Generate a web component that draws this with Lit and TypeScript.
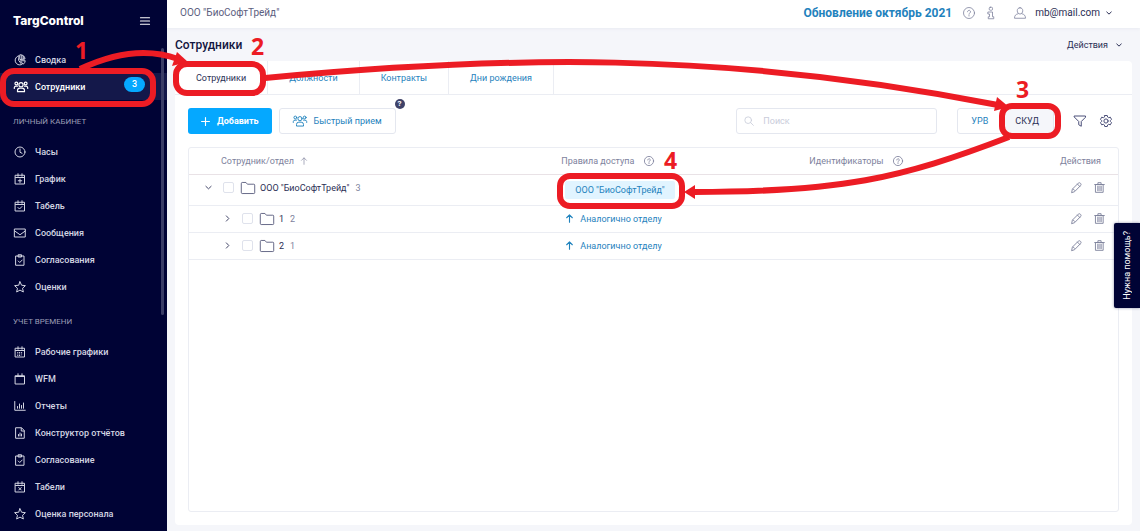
import { LitElement, html, css, svg, nothing } from "lit";
import { customElement, property, state } from "lit/decorators.js";
import { classMap } from "lit/directives/class-map.js";

const glyphs: Record<string, unknown> = {
  pie: svg`<path d="M9.500 3.500a9.300 9.300 0 1 0 6 17.500L9.500 13z"/><path d="M12.500 1.500a9.500 9.500 0 0 1 9.500 8.500l-9.500 1z"/><path d="M13.500 13.500h9a9 9 0 0 1-3.500 6.500z"/><path d="M15.500 3v7M18.500 4.500V10"/>`,
  people: svg`<circle cx="12" cy="8" r="3.6"/><path d="M6 20v-2a4 4 0 0 1 4-4h4a4 4 0 0 1 4 4v2z"/><circle cx="4" cy="6" r="2.4"/><circle cx="20" cy="6" r="2.4"/><path d="M.5 14.500V13a3 3 0 0 1 3-2.500H6M23.500 14.500V13a3 3 0 0 0-3-2.500H18"/>`,
  clock: svg`<circle cx="12" cy="12" r="10"/><path d="M12 6v6.500l4 2"/>`,
  calPlus: svg`<path d="M3 4.500h18V22H3zM3 9h18M8 1.500v5M16 1.500v5M12 12v7M8.500 15.500h7"/>`,
  calCheck: svg`<path d="M3 4.500h18V22H3zM3 9h18M8 1.500v5M16 1.500v5M8 15l3 3 5-5"/>`,
  calX: svg`<path d="M3 4.500h18V22H3zM3 9h18M8 1.500v5M16 1.500v5M9.500 13l5 5M14.500 13l-5 5"/>`,
  calDays: svg`<path d="M3 4.500h18V22H3zM3 9h18M8 1.500v5M16 1.500v5"/><path d="M6.500 13h11M6.500 16h11M6.500 19h8" stroke-dasharray="2 1.600" stroke-linecap="butt"/>`,
  cal: svg`<path d="M3 5.500h18V22H3zM3 7h18M8 1.500V6M16 1.500V6"/>`,
  mail: svg`<path d="M1.500 4h21v16h-21zM1.500 8L12 15.500 22.500 8"/>`,
  clipboard: svg`<path d="M4 4h16v18.500H4zM9 1.500h6V6H9zM8.500 14l3 3 5-5"/>`,
  star: svg`<path d="M12 1.500l3.200 7 7.600.8-5.700 5.200 1.600 7.500L12 18.200 5.300 22l1.600-7.500L1.200 9.300l7.600-.8z"/>`,
  chart: svg`<path d="M1.500 3v17.500h21M7 16.500V13M11 16.500V8M15 16.500V11M19 16.500V6"/>`,
  report: svg`<path d="M4 1.500h11L20.500 7v15.500H4zM14.500 2v6h6M9 18v-3M12 18v-6M15 18v-4"/>`,
  menu: svg`<path d="M1 4h22M1 12h22M1 20h22"/>`,
  help: svg`<circle cx="12" cy="12" r="11"/><path d="M9 9.500a3 3 0 1 1 4.500 2.600c-1 .6-1.500 1.200-1.500 2.400M12 17v1"/>`,
  info: svg`<rect x="8.500" y=".5" width="6.500" height="6" rx="2"/><path d="M6.500 10H15v9.500h2.500v4h-11v-4H9V14H6.500z"/>`,
  user: svg`<path d="M12 1.500c3.600 0 5.500 2.500 5.500 6s-2.200 6.500-5.500 6.500-5.500-3-5.500-6.500 1.900-6 5.500-6z"/><path d="M8 13.500c-4.500 1-7 3.500-7 9h22c0-5.500-2.500-8-7-9"/>`,
  down: svg`<path d="M3 8l9 8.500L21 8"/>`,
  right: svg`<path d="M8 3l8.500 9L8 21"/>`,
  plus: svg`<path d="M12 1.500v21M1.500 12h21"/>`,
  search: svg`<circle cx="10" cy="10" r="8"/><path d="M16 16l6.500 6.500"/>`,
  filter: svg`<path d="M1 2h22v2.500L14.500 13v9.500l-5-3V13L1 4.500z"/>`,
  gear: svg`<path d="M9.500 1h5l.8 3.200 2 1.200 3.400-1 2.300 4.400-2.300 2.300v1.800l2.300 2.300-2.300 4.400-3.400-1-2 1.200-.8 3.200h-5l-.8-3.200-2-1.200-3.400 1L1 15.200l2.300-2.300v-1.800L1 8.800l2.300-4.400 3.400 1 2-1.200z"/><circle cx="12" cy="12" r="4.200"/>`,
  up: svg`<path d="M12 22V3M4.500 10L12 2.500l7.500 7.500"/>`,
  folder: svg`<path d="M.5 4A1.500 1.500 0 0 1 2 2.500h6.500L11 5.500h11A1.500 1.500 0 0 1 23.500 7v13a1.500 1.500 0 0 1-1.500 1.500H2A1.500 1.500 0 0 1 .5 20z"/>`,
  pencil: svg`<path d="M1.500 22.500L3 15.500 16 2.500c1.500-1.500 3.200-1 4.700.4 1.400 1.400 1.800 3.200.3 4.700L8.500 20.500zM14 4.500l5.500 5.500M5 15.500l3 3"/>`,
  trash: svg`<path d="M4 5.500h16v17H4zM1.500 5.500h21M8.500 5V1.500h7V5"/><path d="M8 9v10M10.700 9v10M13.300 9v10M16 9v10" stroke-width="1.600"/>`,
};

@customElement("ui-icon")
export class UiIcon extends LitElement {
  @property() name = "";
  @property({ type: Number }) weight = 2;

  static styles = css`
    :host { display: inline-block; width: 12px; height: 12px; flex: none; }
    svg { display: block; width: 100%; height: 100%; overflow: visible; }
  `;

  render() {
    return html`<svg viewBox="0 0 24 24" fill="none" stroke="currentColor" stroke-width=${this.weight}
      stroke-linejoin="round" stroke-linecap="round" aria-hidden="true">${glyphs[this.name]}</svg>`;
  }
}

interface NavItem { icon: string; label: string; badge?: number; active?: boolean }
interface NavGroup { title?: string; items: NavItem[] }

const navigation: NavGroup[] = [
  { items: [
    { icon: "pie", label: "Сводка" },
    { icon: "people", label: "Сотрудники", badge: 3, active: true },
  ] },
  { title: "Личный кабинет", items: [
    { icon: "clock", label: "Часы" },
    { icon: "calPlus", label: "График" },
    { icon: "calCheck", label: "Табель" },
    { icon: "mail", label: "Сообщения" },
    { icon: "clipboard", label: "Согласования" },
    { icon: "star", label: "Оценки" },
  ] },
  { title: "Учет времени", items: [
    { icon: "calDays", label: "Рабочие графики" },
    { icon: "cal", label: "WFM" },
    { icon: "chart", label: "Отчеты" },
    { icon: "report", label: "Конструктор отчётов" },
    { icon: "clipboard", label: "Согласование" },
    { icon: "calX", label: "Табели" },
    { icon: "star", label: "Оценка персонала" },
  ] },
];

@customElement("app-sidebar")
export class AppSidebar extends LitElement {
  static styles = css`
    :host { display: block; position: relative; background: #000335; color: #d3d5e2; overflow: hidden; }
    .head { display: flex; align-items: center; justify-content: space-between; height: 41px; padding: 0 17px 0 13px; margin-bottom: 5px; }
    .brand { font: 800 12px/16px Inter, sans-serif; color: #fff; }
    .menu { border: 0; background: none; padding: 0; color: #fff; display: flex; }
    .menu ui-icon { width: 10px; height: 10px; }
    ul { list-style: none; margin: 0; padding: 0; }
    .title { margin: 0; padding: 5px 13px 0; font-size: 8px; line-height: 33px; font-weight: 400; text-transform: uppercase; color: #9a9cb4; }
    .link { display: flex; align-items: center; height: 27px; padding: 0 22px 0 14px; gap: 9px; color: inherit; text-decoration: none; font-weight: 500; }
    .link.active { background: #14184a; color: #fff; gap: 7px; }
    .link.active ui-icon { width: 14px; height: 14px; }
    .label { flex: 1; white-space: nowrap; }
    .badge { min-width: 21px; height: 15px; border-radius: 8px; background: #05a8ff; color: #fff; line-height: 15px; text-align: center; margin-bottom: 4px; }
    .thumb { position: absolute; top: 48px; right: 3px; width: 3px; height: 267px; border-radius: 2px; background: #3a3d66; }
  `;

  render() {
    return html`
      <div class="head">
        <span class="brand">TargControl</span>
        <button class="menu" aria-label="Меню"><ui-icon name="menu" weight="2.5"></ui-icon></button>
      </div>
      <nav>
        ${navigation.map((group) => html`
          ${group.title ? html`<h2 class="title">${group.title}</h2>` : nothing}
          <ul>
            ${group.items.map((item) => html`
              <li><a href="#" class=${classMap({ link: true, active: !!item.active })}>
                <ui-icon name=${item.icon}></ui-icon>
                <span class="label">${item.label}</span>
                ${item.badge ? html`<span class="badge">${item.badge}</span>` : nothing}
              </a></li>`)}
          </ul>`)}
      </nav>
      <div class="thumb"></div>`;
  }
}

interface Row { name: string; count: number; level: number; open?: boolean; rule?: string }

const rows: Row[] = [
  { name: "ООО \"БиоСофтТрейд\"", count: 3, level: 0, open: true, rule: "ООО \"БиоСофтТрейд\"" },
  { name: "1", count: 2, level: 1 },
  { name: "2", count: 1, level: 1 },
];

@customElement("staff-table")
export class StaffTable extends LitElement {
  static styles = css`
    :host { display: block; border: 1px solid #ebedf3; border-radius: 3px; }
    * { box-sizing: border-box; }
    table { width: 100%; border-collapse: collapse; table-layout: fixed; }
    th, td { height: 27px; padding: 0 12px 0 10px; text-align: left; font-weight: 400; border-bottom: 1px solid #ebedf3; white-space: nowrap; }
    th { height: 26px; color: #7e829d; border-bottom-color: #e9e2e6; }
    .tall td { height: 31px; }
    .tall .cell { padding-bottom: 4px; }
    .name { width: 39%; }
    .rules { width: 248px; }
    .acts { width: 72px; }
    th.name { padding-left: 32px; }
    th.acts { padding: 0 17px 0 0; text-align: right; }
    td.acts { padding: 0 13px 0 0; }
    .cell { display: flex; align-items: center; }
    .head-icon { width: 10px; height: 10px; margin-left: 10px; vertical-align: -2px; }
    .sort { width: 8px; margin-left: 6px; }
    .entry { padding-left: 6px; }
    .nested { padding-left: 25px; }
    button { border: 0; background: none; padding: 0; font: inherit; color: inherit; display: flex; }
    .toggle ui-icon { width: 7px; height: 7px; }
    .check { appearance: none; width: 11px; height: 11px; margin: 0 7px 0 11px; border: 1px solid #dfe2ec; border-radius: 2px; background: #fff; }
    .folder { width: 14px; height: 14px; color: #5c6080; margin-right: 5px; }
    .text { color: #2b2f55; }
    .count { color: #7e829d; margin-left: 6px; }
    .tag { display: block; width: max-content; margin: 1px 0 0 4px; padding: 0 10px; line-height: 18px; border-radius: 2px; background: #e1f4ff; color: #1f82bd; text-decoration: none; }
    .inherit { color: #1f82bd; gap: 6px; padding-left: 4px; align-items: center; }
    .inherit ui-icon { width: 9px; height: 9px; }
    .tools { justify-content: flex-end; gap: 12px; color: #7e829d; }
    .tools ui-icon { width: 11px; height: 11px; }
  `;

  render() {
    return html`
      <table>
        <thead><tr>
          <th class="name">Сотрудник/отдел<ui-icon class="head-icon sort" name="up"></ui-icon></th>
          <th class="rules">Правила доступа<ui-icon class="head-icon" name="help"></ui-icon></th>
          <th>Идентификаторы<ui-icon class="head-icon" name="help"></ui-icon></th>
          <th class="acts">Действия</th>
        </tr></thead>
        <tbody>
          ${rows.map((row) => html`
            <tr class=${classMap({ tall: row.level === 0 })}>
              <td class="name"><div class=${classMap({ cell: true, entry: true, nested: row.level > 0 })}>
                <button class="toggle" aria-label="Развернуть"><ui-icon name=${row.open ? "down" : "right"} weight="3"></ui-icon></button>
                <input class="check" type="checkbox" aria-label=${row.name} />
                <ui-icon class="folder" name="folder" weight="1.600"></ui-icon>
                <span class="text">${row.name}</span><span class="count">${row.count}</span>
              </div></td>
              <td>${row.rule
                ? html`<a class="tag" href="#">${row.rule}</a>`
                : html`<button class="inherit"><ui-icon name="up" weight="3"></ui-icon>Аналогично отделу</button>`}</td>
              <td></td>
              <td class="acts"><div class="cell tools">
                <button aria-label="Изменить"><ui-icon name="pencil"></ui-icon></button>
                <button aria-label="Удалить"><ui-icon name="trash"></ui-icon></button>
              </div></td>
            </tr>`)}
        </tbody>
      </table>`;
  }
}

@customElement("guide-overlay")
export class GuideOverlay extends LitElement {
  static styles = css`
    :host { position: absolute; inset: 0; pointer-events: none; overflow: hidden; }
    svg { display: block; width: 1140px; height: 531px; }
    .line { fill: none; stroke: #ec1c24; stroke-width: 6; }
    .solid { fill: #ec1c24; }
    text { font: 700 23px "Open Sans", sans-serif; fill: #ec1c24; }
  `;

  render() {
    return html`
      <svg viewBox="0 0 1140 531">
        <g class="line">
          <rect x="3" y="71" width="150" height="33" rx="11"/>
          <rect x="176" y="64" width="87" height="29" rx="11"/>
          <rect x="1002" y="106" width="56" height="30" rx="10"/>
          <rect x="560" y="176" width="122" height="30" rx="10"/>
          <path d="M80 69Q135 43 178 59"/>
          <path d="M265 78C500 56 720 50 998 105"/>
          <path d="M1009 137C900 179 840 192 694 192"/>
        </g>
        <g class="solid">
          <path d="M177 52l11 10-16 4z"/>
          <path d="M997 97l12 10-15 4z"/>
          <path d="M684 192l11-7v14z"/>
        </g>
        <text x="75" y="59">1</text>
        <text x="251" y="55">2</text>
        <text x="1016" y="98">3</text>
        <text x="664" y="169">4</text>
      </svg>`;
  }
}

@customElement("app-root")
export class AppRoot extends LitElement {
  @state() private mode = "СКУД";
  private tabs = ["Сотрудники", "Должности", "Контракты", "Дни рождения"];

  static styles = css`
    :host { position: relative; display: grid; grid-template-columns: 167px minmax(0, 1fr); height: 100vh; overflow: hidden; font: 400 9px/14px Roboto, sans-serif; color: #2b2f55; background: #f5f6fa; }
    * { box-sizing: border-box; }
    button, input { font: inherit; color: inherit; }
    button { display: flex; align-items: center; border: 0; background: none; padding: 0; }
    .main { display: flex; flex-direction: column; }
    .top { display: flex; align-items: center; height: 28px; padding: 0 28px 2px 13px; background: #fff; box-shadow: 0 1px 3px #e9ebf2; font-size: 10px; }
    .company { flex: 1; color: #5c6080; }
    .news { color: #1f82bd; font-size: 12px; font-weight: 700; text-decoration: none; margin-right: 11px; }
    .top ui-icon { color: #7e829d; }
    .user { gap: 9px; margin-left: 17px; }
    .info { margin-left: 10px; }
    .user ui-icon.caret { width: 6px; height: 6px; color: #2b2f55; margin-left: -3px; }
    .heading { display: flex; align-items: center; justify-content: space-between; height: 33px; padding: 0 18px 0 8px; }
    h1 { margin: 0; font-size: 12px; font-weight: 500; color: #12153f; }
    .actions { gap: 8px; }
    .actions ui-icon { width: 6px; height: 6px; }
    .card { flex: 1; display: flex; flex-direction: column; margin: 0 8px 6px; background: #fff; border-radius: 4px; }
    .tabs { display: flex; height: 34px; border-bottom: 1px solid #ebedf3; }
    .tab { padding: 0 21px; color: #1f82bd; border-right: 1px solid #ebedf3; }
    .tab.current { color: #2b2f55; }
    .bar { display: flex; align-items: center; padding: 13px 20px 13px 13px; }
    .btn { height: 26px; border-radius: 3px; padding: 0 13px; gap: 7px; }
    .add { background: #05a8ff; color: #fff; font-weight: 700; margin-right: 7px; }
    .add ui-icon { width: 9px; height: 9px; }
    .quick { position: relative; border: 1px solid #e4e7ef; color: #1f82bd; }
    .quick ui-icon { width: 14px; height: 14px; }
    .hint { position: absolute; top: -10px; right: -10px; width: 10px; height: 10px; border-radius: 5px; background: #3f4268; color: #fff; font-size: 8px; line-height: 10px; font-weight: 700; text-align: center; }
    .search { display: flex; align-items: center; width: 201px; height: 26px; margin: 0 20px 0 auto; padding: 0 7px; gap: 9px; border: 1px solid #e4e7ef; border-radius: 3px; color: #c9ccda; }
    .search ui-icon { width: 10px; height: 10px; }
    .search input { flex: 1; min-width: 0; border: 0; padding: 0; outline: 0; background: none; }
    .search input::placeholder { color: #c9ccda; }
    .modes { display: flex; height: 26px; border: 1px solid #e4e7ef; border-radius: 3px; margin-right: 6px; }
    .mode { padding: 0 13px; color: #1f82bd; }
    .mode.on { padding: 0 14px; background: #f5f6fa; color: #2b2f55; }
    .tool { margin-left: 14px; color: #4a4e78; }
    staff-table { flex: 1; margin: 0 13px 13px; }
    .assist { position: absolute; right: 0; top: 223px; width: 26px; height: 85px; border-radius: 2px 0 0 2px; background: #000335; color: #fff; justify-content: center; box-shadow: 0 0 3px #8d8fa8; }
    .assist span { writing-mode: vertical-rl; transform: rotate(180deg); }
  `;

  render() {
    return html`
      <app-sidebar></app-sidebar>
      <div class="main">
        <header class="top">
          <span class="company">ООО "БиоСофтТрейд"</span>
          <a class="news" href="#">Обновление октябрь 2021</a>
          <button aria-label="Справка"><ui-icon name="help" weight="1.600"></ui-icon></button>
          <button class="info" aria-label="Информация"><ui-icon name="info" weight="1.600"></ui-icon></button>
          <button class="user"><ui-icon name="user" weight="1.600"></ui-icon>mb@mail.com<ui-icon class="caret" name="down" weight="4"></ui-icon></button>
        </header>
        <div class="heading">
          <h1>Сотрудники</h1>
          <button class="actions">Действия<ui-icon name="down" weight="4"></ui-icon></button>
        </div>
        <main class="card">
          <div class="tabs">
            ${this.tabs.map((t, i) => html`<button class=${classMap({ tab: true, current: i === 0 })}>${t}</button>`)}
          </div>
          <div class="bar">
            <button class="btn add"><ui-icon name="plus" weight="3"></ui-icon>Добавить</button>
            <button class="btn quick"><ui-icon name="people" weight="1.600"></ui-icon>Быстрый прием<span class="hint">?</span></button>
            <label class="search"><ui-icon name="search"></ui-icon><input type="text" placeholder="Поиск" aria-label="Поиск" /></label>
            <div class="modes">
              ${["УРВ", "СКУД"].map((m) => html`
                <button class=${classMap({ mode: true, on: this.mode === m })} @click=${() => (this.mode = m)}>${m}</button>`)}
            </div>
            <button class="tool" aria-label="Фильтр"><ui-icon name="filter"></ui-icon></button>
            <button class="tool" aria-label="Настройки"><ui-icon name="gear"></ui-icon></button>
          </div>
          <staff-table></staff-table>
        </main>
      </div>
      <button class="assist"><span>Нужна помощь?</span></button>
      <guide-overlay></guide-overlay>`;
  }
}
